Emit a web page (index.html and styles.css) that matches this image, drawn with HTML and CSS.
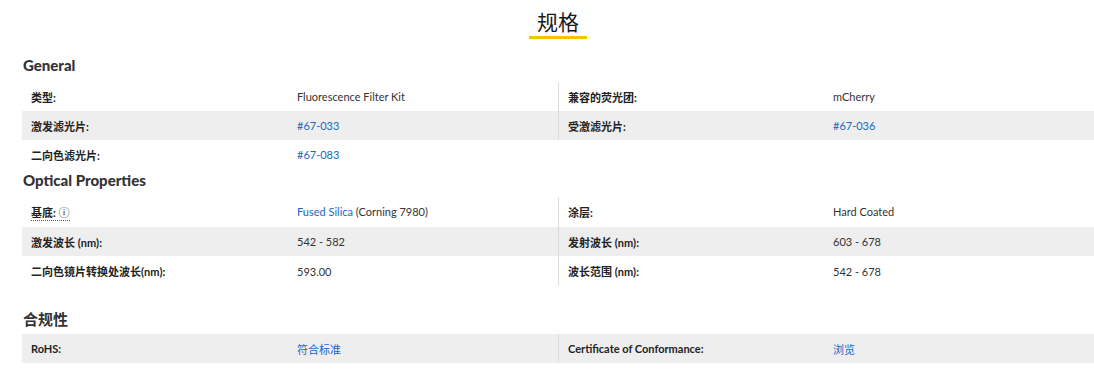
FILE: index.html
```html
<!DOCTYPE html>
<html lang="zh-CN">
<head>
<meta charset="utf-8">
<title>规格</title>
<link rel="stylesheet" href="styles.css">
</head>
<body>
<div class="page">
  <div class="title-wrap"><h1 class="title">规格</h1></div>

  <h2 class="section">General</h2>
  <div class="table">
    <div class="row">
      <div class="half left"><span class="label">类型:</span><span class="value">Fluorescence Filter Kit</span></div>
      <div class="half right"><span class="label">兼容的荧光团:</span><span class="value">mCherry</span></div>
    </div>
    <div class="row alt">
      <div class="half left"><span class="label">激发滤光片:</span><span class="value"><a class="link">#67-033</a></span></div>
      <div class="half right"><span class="label">受激滤光片:</span><span class="value"><a class="link">#67-036</a></span></div>
    </div>
    <div class="row">
      <div class="half left"><span class="label">二向色滤光片:</span><span class="value"><a class="link">#67-083</a></span></div>
    </div>
  </div>

  <h2 class="section optical">Optical Properties</h2>
  <div class="table">
    <div class="row tall">
      <div class="half left"><span class="label"><span class="tip">基底: <span class="info">ⓘ</span></span></span><span class="value"><a class="link">Fused Silica</a> (Corning 7980)</span></div>
      <div class="half right"><span class="label">涂层:</span><span class="value">Hard Coated</span></div>
    </div>
    <div class="row alt tall">
      <div class="half left"><span class="label">激发波长 (nm):</span><span class="value">542 - 582</span></div>
      <div class="half right"><span class="label">发射波长 (nm):</span><span class="value">603 - 678</span></div>
    </div>
    <div class="row tall">
      <div class="half left"><span class="label">二向色镜片转换处波长(nm):</span><span class="value">593.00</span></div>
      <div class="half right"><span class="label">波长范围 (nm):</span><span class="value">542 - 678</span></div>
    </div>
  </div>

  <h2 class="section compliance">合规性</h2>
  <div class="table">
    <div class="row alt">
      <div class="half left"><span class="label">RoHS:</span><span class="value"><a class="link">符合标准</a></span></div>
      <div class="half right"><span class="label">Certificate of Conformance:</span><span class="value"><a class="link">浏览</a></span></div>
    </div>
  </div>
</div>
</body>
</html>
```

FILE: styles.css
```css
* { box-sizing: border-box; }
html, body { margin: 0; padding: 0; background: #fff; }
body {
  font-family: Lato, "Noto Sans CJK SC", sans-serif;
  color: #333;
  overflow: hidden;
}
.page {
  width: 1072px;
  margin-left: 22px;
  padding-top: 7px;
}
.title-wrap {
  display: flex;
  justify-content: center;
}
.title {
  margin: 0;
  font-family: "Noto Sans CJK SC", sans-serif;
  font-weight: 400;
  font-size: 21px;
  line-height: 29px;
  color: #1a1a1a;
  padding: 0 8px;
  border-bottom: 3px solid #f5c300;
}
.section {
  margin: 0;
  font-family: Lato, "Noto Sans CJK SC", sans-serif;
  font-weight: 900;
  font-size: 15px;
  line-height: 20px;
  color: #333;
  padding-left: 1px;
  margin-top: 16px;
  margin-bottom: 7px;
}
.section.optical { margin-top: 1px; margin-bottom: 7px; }
.section.compliance {
  margin-top: 23px;
  margin-bottom: 5px;
  font-family: "Noto Sans CJK SC", sans-serif;
  font-weight: 700;
  font-size: 15px;
}
.table { display: flex; flex-direction: column; }
.row {
  display: flex;
  height: 29px;
}
.row.tall { height: 29.7px; }
.row.alt { background: #eeeeee; }
.half {
  display: flex;
  align-items: center;
  width: 536px;
}
.half.right { border-left: 1px solid #dcdcdc; }
.label {
  width: 268px;
  padding-left: 9px;
  font-size: 11px;
  font-weight: 700;
  color: #222;
}
.value {
  padding-left: 7px;
  font-size: 11px;
  color: #333;
}
.right .value { padding-left: 6px; }
.link { color: #1769c4; text-decoration: none; }
.tip {
  border-bottom: 1px dotted #555;
  padding-bottom: 1px;
}
.info { font-weight: 400; font-size: 11px; }
```
